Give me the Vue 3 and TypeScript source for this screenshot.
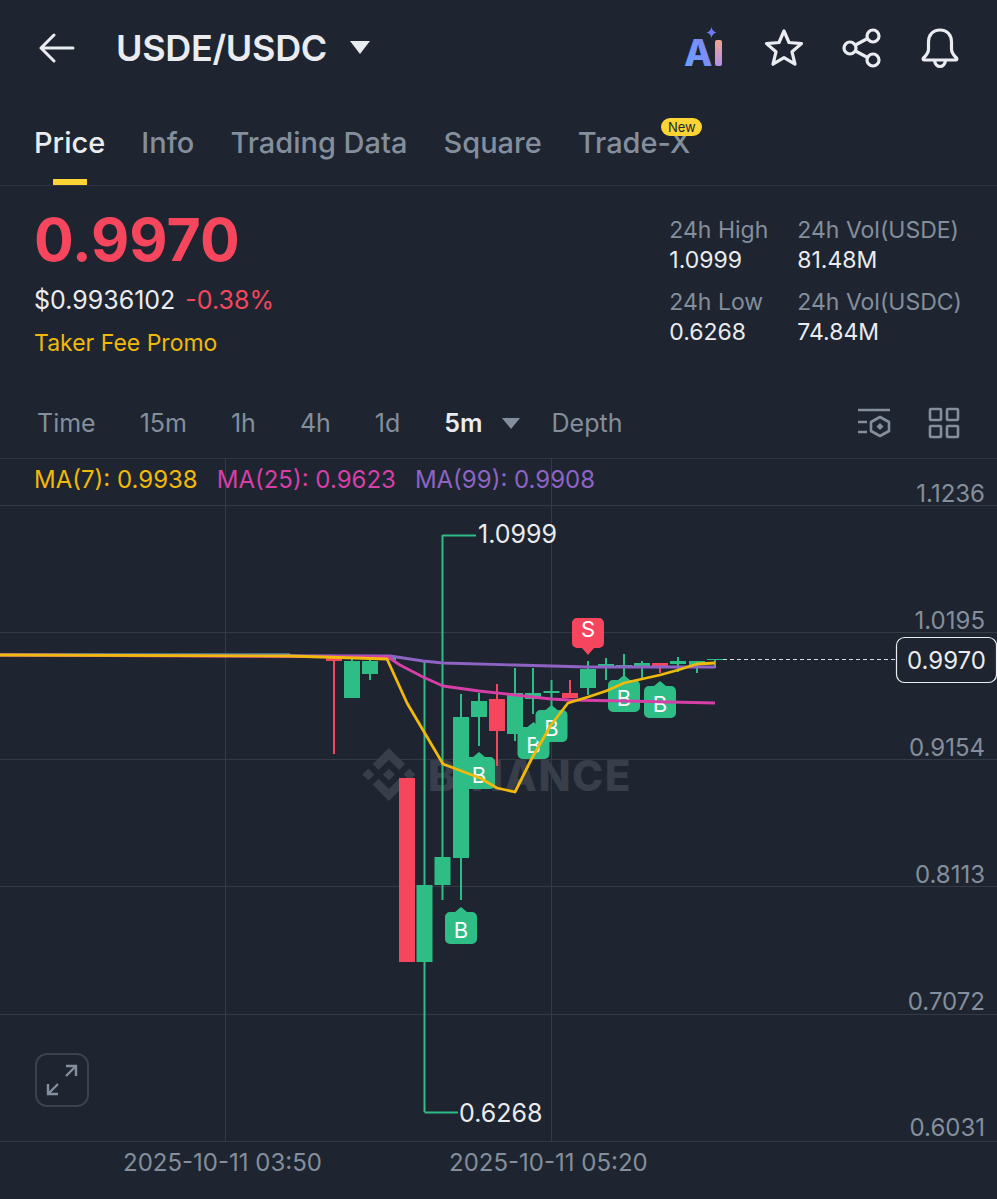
<script setup lang="ts">
interface Candle { x: number; high: number; low: number; top: number; bottom: number; up: boolean }
interface Marker { x: number; y: number; label: string; up: boolean }

const candles: Candle[] = [
  { x: 298, high: 657, low: 658, top: 657, bottom: 658, up: false },
  { x: 316, high: 657, low: 658, top: 657, bottom: 658, up: false },
  { x: 334, high: 657, low: 754, top: 657, bottom: 661, up: false },
  { x: 352, high: 659, low: 698, top: 661, bottom: 698, up: true },
  { x: 370, high: 660, low: 680, top: 661, bottom: 674, up: true },
  { x: 388, high: 658, low: 660, top: 658, bottom: 660, up: true },
  { x: 407, high: 778, low: 962, top: 778, bottom: 962, up: false },
  { x: 424.5, high: 662, low: 1112, top: 885, bottom: 962, up: true },
  { x: 442.5, high: 535, low: 900, top: 857, bottom: 885, up: true },
  { x: 461, high: 694, low: 900, top: 717, bottom: 858, up: true },
  { x: 479, high: 693, low: 746, top: 701, bottom: 717, up: true },
  { x: 497, high: 684, low: 766, top: 699, bottom: 731, up: false },
  { x: 515, high: 668, low: 741, top: 693, bottom: 734, up: true },
  { x: 533, high: 668, low: 714, top: 693, bottom: 699, up: true },
  { x: 551.5, high: 680, low: 706, top: 691, bottom: 693, up: true },
  { x: 570, high: 680, low: 698, top: 693, bottom: 698, up: false },
  { x: 588, high: 661, low: 695, top: 669, bottom: 688, up: true },
  { x: 606, high: 658, low: 680, top: 664, bottom: 667, up: true },
  { x: 624, high: 654, low: 678, top: 665, bottom: 668, up: true },
  { x: 642, high: 661, low: 680, top: 663, bottom: 666, up: true },
  { x: 660, high: 663, low: 673, top: 663, bottom: 666, up: false },
  { x: 678, high: 657, low: 672, top: 661, bottom: 664, up: true },
  { x: 697, high: 661, low: 673, top: 661, bottom: 665, up: true },
  { x: 715, high: 659, low: 668, top: 659, bottom: 660, up: true }
]

const markers: Marker[] = [
  { x: 461, y: 907, label: 'B', up: true },
  { x: 479, y: 752, label: 'B', up: true },
  { x: 533.5, y: 722, label: 'B', up: true },
  { x: 551.5, y: 705, label: 'B', up: true },
  { x: 624, y: 675, label: 'B', up: true },
  { x: 660, y: 681, label: 'B', up: true },
  { x: 588, y: 655, label: 'S', up: false }
]

const grid = [505, 632, 759, 886, 1014, 1141]
const axis = [
  { y: 502, t: '1.1236' },
  { y: 629, t: '1.0195' },
  { y: 756, t: '0.9154' },
  { y: 883, t: '0.8113' },
  { y: 1010, t: '0.7072' },
  { y: 1136, t: '0.6031' }
]

const ma7 = '0,655 290,656 387,659 407,703 443,764 480,778 497,788 515,792 532,758 551,725 568,703 588,697 606,691 624,683 642,679 660,675 678,670 697,664 715,663'
const ma25 = '0,655 388,657 400,665 423,677 443,686 479,691 515,695 551,699 569,700 624,701 715,703'
const ma99 = '0,655 390,656 423,661 443,663 515,665 588,667 715,667'

function markerPath(m: Marker): string {
  if (m.up) {
    const x = m.x
    const t = m.y
    return `M${x} ${t}l6 5h5a5 5 0 0 1 5 5v22a5 5 0 0 1-5 5h-22a5 5 0 0 1-5-5v-22a5 5 0 0 1 5-5h5z`
  }
  const x = m.x
  const b = m.y
  return `M${x} ${b}l-6-7h-5a5 5 0 0 1-5-5v-20a5 5 0 0 1 5-5h22a5 5 0 0 1 5 5v20a5 5 0 0 1-5 5h-5z`
}
function markerTextY(m: Marker): number {
  return m.up ? m.y + 31 : m.y - 18
}

const tabs = ['Price', 'Info', 'Trading Data', 'Square', 'Trade-X']
const intervals = ['Time', '15m', '1h', '4h', '1d']
</script>

<template>
  <div class="page">
    <header class="topbar">
      <svg class="back" width="36" height="30" viewBox="0 0 36 30" fill="none" stroke="#eaecef" stroke-width="3" stroke-linecap="round" stroke-linejoin="round">
        <path d="M2 15h32M15 2 2 15l13 13" />
      </svg>
      <h1 class="pair">USDE/USDC</h1>
      <span class="caret"></span>
      <div class="top-icons">
        <svg width="42" height="42" viewBox="0 0 42 42">
          <defs>
            <linearGradient id="aiA" x1="0" y1="1" x2="1" y2="0">
              <stop offset="0" stop-color="#64a8ff" />
              <stop offset="1" stop-color="#8b7cf0" />
            </linearGradient>
            <linearGradient id="aiI" x1="0" y1="0" x2="0" y2="1">
              <stop offset="0" stop-color="#f0a58e" />
              <stop offset="1" stop-color="#b48fe8" />
            </linearGradient>
          </defs>
          <path d="M27.5 0c.6 3 2 4.500 5 5.500-3 1-4.400 2.500-5 5.500-.6-3-2-4.500-5-5.500 3-1 4.400-2.500 5-5.500z" fill="#6f78f2" />
          <text x="0" y="38.500" class="ai-a">A</text>
          <rect x="31" y="13" width="7" height="26" rx="2" fill="url(#aiI)" />
        </svg>
        <svg width="40" height="40" viewBox="0 0 40 40" fill="none" stroke="#eaecef" stroke-width="3.200" stroke-linejoin="round">
          <path d="m20 3 5 11.500 12.500 1.100-9.500 8.200 3 12.400L20 29.600 9 36.200l3-12.400-9.500-8.200L15 14.500z" />
        </svg>
        <svg width="40" height="40" viewBox="0 0 40 40" fill="none" stroke="#eaecef" stroke-width="3.200">
          <circle cx="8" cy="20" r="6" /><circle cx="31" cy="8" r="6" /><circle cx="31" cy="32" r="6" />
          <path d="m13.500 17 12-6.500M13.500 23l12 6.500" />
        </svg>
        <svg width="40" height="42" viewBox="0 0 40 42" fill="none" stroke="#eaecef" stroke-width="3.200" stroke-linejoin="round">
          <path d="M20 3c-7.500 0-11.500 5.500-11.500 12v7c0 3.500-1.800 6-5 9-.8.800-.3 2 .8 2h31.400c1.100 0 1.600-1.200.8-2-3.200-3-5-5.500-5-9v-7C31.500 8.500 27.500 3 20 3z" />
          <path d="M14.500 33.500c.5 3.500 2.800 6 5.500 6s5-2.500 5.500-6" />
        </svg>
      </div>
    </header>

    <nav class="tabs">
      <div v-for="(t, i) in tabs" :key="t" class="tab" :class="{ active: i === 0 }">
        {{ t }}
        <span v-if="t === 'Trade-X'" class="badge">New</span>
      </div>
    </nav>

    <section class="stats">
      <div class="price-col">
        <div class="last">0.9970</div>
        <div class="fiat"><span>$0.9936102</span><span class="neg">-0.38%</span></div>
        <div class="promo">Taker Fee Promo</div>
      </div>
      <div class="stat-grid">
        <div class="stat"><div class="k">24h High</div><div class="v">1.0999</div></div>
        <div class="stat"><div class="k">24h Vol(USDE)</div><div class="v">81.48M</div></div>
        <div class="stat"><div class="k">24h Low</div><div class="v">0.6268</div></div>
        <div class="stat"><div class="k">24h Vol(USDC)</div><div class="v">74.84M</div></div>
      </div>
    </section>

    <section class="toolbar">
      <span v-for="t in intervals" :key="t" class="iv">{{ t }}</span>
      <span class="iv on">5m</span>
      <span class="mini-caret"></span>
      <span class="iv depth">Depth</span>
      <div class="tool-icons">
        <svg width="34" height="32" viewBox="0 0 34 32" fill="none" stroke="#848e9c" stroke-width="2.600">
          <path d="M1 3h32M1 15h9M1 25h9" />
          <path d="m23 10 9 5v9l-9 5-9-5v-9z" stroke-linejoin="round" />
          <path d="m23 16 3.500 3.500L23 23l-3.500-3.500z" fill="#848e9c" stroke="none" />
        </svg>
        <svg width="32" height="32" viewBox="0 0 32 32" fill="none" stroke="#848e9c" stroke-width="2.600">
          <rect x="2" y="2" width="11" height="11" rx="1" /><rect x="19" y="2" width="11" height="11" rx="1" />
          <rect x="2" y="19" width="11" height="11" rx="1" /><rect x="19" y="19" width="11" height="11" rx="1" />
        </svg>
      </div>
    </section>

    <section class="chart">
      <svg class="plot" width="997" height="741" viewBox="0 458 997 741">
        <line v-for="y in grid" :key="y" x1="0" x2="997" :y1="y + 0.5" :y2="y + 0.5" class="grid" />
        <line x1="225.500" x2="225.500" y1="458" y2="1141" class="grid" />
        <line x1="551.500" x2="551.500" y1="458" y2="1141" class="grid" />

        <g fill="#383e4a" transform="translate(363 748.500) scale(.405)">
          <path d="M38.730 53.200 64 27.940 89.270 53.200l14.700-14.700L64-1.460 24.030 38.500zM-1.460 64l14.700-14.700L27.940 64l-14.700 14.700zM38.730 74.800 64 100.060 89.270 74.800l14.700 14.700L64 129.460 24.030 89.500zM100.060 64l14.700-14.700L129.460 64l-14.700 14.700zM78.900 64 64 78.900 49.100 64 64 49.100z" />
        </g>
        <text x="428" y="791" class="wm">BINANCE</text>

        <line x1="0" x2="290" y1="654.500" y2="654.500" stroke="#4f8f97" stroke-width="2.500" />
        <g v-for="c in candles" :key="c.x" :fill="c.up ? '#2ebd85' : '#f6465d'">
          <rect :x="c.x - 1" :y="c.high" width="2" :height="c.low - c.high" />
          <rect :x="c.x - 8" :y="c.top" width="16" :height="c.bottom - c.top" />
        </g>

        <g v-for="m in markers" :key="m.x">
          <path :d="markerPath(m)" :fill="m.up ? '#2ebd85' : '#f6465d'" />
          <text :x="m.x" :y="markerTextY(m)" class="mk">{{ m.label }}</text>
        </g>

        <polyline :points="ma99" class="ma" stroke="#8e63c4" />
        <polyline :points="ma25" class="ma" stroke="#d63fa8" />
        <polyline :points="ma7" class="ma" stroke="#f0b90b" />

        <path d="M442.500 535.500H476M424.500 1112.500H458" stroke="#2ebd85" stroke-width="2" fill="none" />
        <text x="478" y="543" class="ext">1.0999</text>
        <text x="459" y="1122" class="ext">0.6268</text>

        <text v-for="a in axis" :key="a.t" x="985" :y="a.y" class="axis">{{ a.t }}</text>

        <line x1="723" x2="897" y1="659.500" y2="659.500" stroke="#d5d8dc" stroke-width="1.200" stroke-dasharray="4 3" />
        <rect x="896.500" y="637.500" width="100" height="45" rx="8" fill="#1e2530" stroke="#eaecef" stroke-width="1.200" />
        <text x="946.500" y="669" class="tag">0.9970</text>

        <text x="123" y="1171" class="date">2025-10-11 03:50</text>
        <text x="449" y="1171" class="date">2025-10-11 05:20</text>
      </svg>

      <div class="legend">
        <span class="l7">MA(7): 0.9938</span>
        <span class="l25">MA(25): 0.9623</span>
        <span class="l99">MA(99): 0.9908</span>
      </div>

      <button class="expand" type="button" aria-label="Expand">
        <svg width="32" height="32" viewBox="0 0 32 32" fill="none" stroke="#848e9c" stroke-width="2.400">
          <path d="M20 12 30 2M20 2h10v10M12 20 2 30M2 20v10h10" />
        </svg>
      </button>
    </section>
  </div>
</template>

<style>
html, body { margin: 0; background: #1e2530; }
</style>

<style scoped>
.page {
  width: 997px;
  height: 1199px;
  overflow: hidden;
  background: #1e2530;
  font-family: Inter, "Liberation Sans", sans-serif;
  color: #eaecef;
}
.topbar {
  display: flex;
  align-items: center;
  height: 95px;
  padding: 0 37px 0 39px;
  box-sizing: border-box;
}
.pair {
  margin: 0 0 0 41px;
  font-size: 36px;
  font-weight: 600;
  letter-spacing: -0.3px;
}
.caret {
  margin-left: 23px;
  border-left: 10px solid transparent;
  border-right: 10px solid transparent;
  border-top: 13px solid #eaecef;
}
.top-icons {
  margin-left: auto;
  display: flex;
  align-items: center;
  gap: 38px;
}
.ai-a {
  font-family: Inter, sans-serif;
  font-size: 37px;
  font-weight: 800;
  fill: url(#aiA);
}
.tabs {
  display: flex;
  gap: 36px;
  height: 91px;
  padding: 0 34px;
  box-sizing: border-box;
  border-bottom: 1px solid #2f3541;
}
.tab {
  position: relative;
  padding-top: 30px;
  font-size: 29px;
  font-weight: 500;
  color: #848e9c;
}
.tab.active { color: #eaecef; }
.tab.active::after {
  content: "";
  position: absolute;
  left: 19px;
  bottom: 0;
  width: 34px;
  height: 6px;
  background: #fcd535;
}
.badge {
  position: absolute;
  right: -12px;
  top: 23px;
  width: 41px;
  height: 18px;
  border-radius: 9px;
  background: #fcd535;
  color: #202630;
  font-size: 13px;
  font-weight: 400;
  line-height: 18px;
  text-align: center;
}
.stats {
  display: flex;
  justify-content: space-between;
  height: 202px;
  padding: 0 35px 0 34px;
  box-sizing: border-box;
}
.last {
  margin-top: 19px;
  font-size: 59px;
  font-weight: 700;
  line-height: 70px;
  color: #f6465d;
}
.fiat {
  display: flex;
  gap: 10px;
  margin-top: 10px;
  font-size: 25px;
  line-height: 30px;
}
.neg { color: #f6465d; }
.promo {
  margin-top: 13px;
  font-size: 23px;
  line-height: 30px;
  color: #f0b90b;
}
.stat-grid {
  display: grid;
  grid-template-columns: 128px auto;
  row-gap: 11px;
  margin-top: 29px;
  align-content: start;
}
.k {
  font-size: 23px;
  line-height: 30px;
  color: #848e9c;
}
.v {
  font-size: 23px;
  line-height: 31px;
  color: #eaecef;
}
.toolbar {
  display: flex;
  align-items: center;
  height: 70px;
  padding: 0 37px;
  box-sizing: border-box;
  font-size: 25px;
  color: #848e9c;
}
.iv { margin-right: 44px; }
.iv.on { color: #eaecef; font-weight: 600; margin-right: 19px; }
.mini-caret {
  border-left: 9px solid transparent;
  border-right: 9px solid transparent;
  border-top: 11px solid #848e9c;
  margin-right: 32px;
}
.iv.depth { margin-right: 0; }
.tool-icons {
  margin-left: auto;
  display: flex;
  gap: 37px;
}
.chart {
  position: relative;
  height: 741px;
  border-top: 1px solid #2f3541;
  box-sizing: border-box;
}
.plot {
  position: absolute;
  left: 0;
  top: -1px;
  font-family: Inter, sans-serif;
}
.grid { stroke: #353b46; stroke-width: 1; }
.wm { font-size: 42px; font-weight: 800; fill: #383e4a; letter-spacing: 1.500px; }
.ma { fill: none; stroke-width: 2.800; stroke-linejoin: round; }
.mk { font-size: 22px; fill: #fff; text-anchor: middle; }
.ext { font-size: 25px; fill: #eaecef; }
.axis { font-size: 24px; fill: #848e9c; text-anchor: end; }
.tag { font-size: 24px; fill: #eaecef; text-anchor: middle; }
.date { font-size: 24px; fill: #848e9c; }
.legend {
  position: relative;
  display: flex;
  gap: 19px;
  padding: 5px 0 0 34px;
  font-size: 24px;
  line-height: 32px;
}
.l7 { color: #f0b90b; }
.l25 { color: #d63fa8; }
.l99 { color: #8e63c4; }
.expand {
  position: absolute;
  left: 35px;
  top: 594px;
  width: 54px;
  height: 54px;
  padding: 0;
  display: flex;
  align-items: center;
  justify-content: center;
  background: transparent;
  border: 2px solid #3b414d;
  border-radius: 12px;
}
</style>
